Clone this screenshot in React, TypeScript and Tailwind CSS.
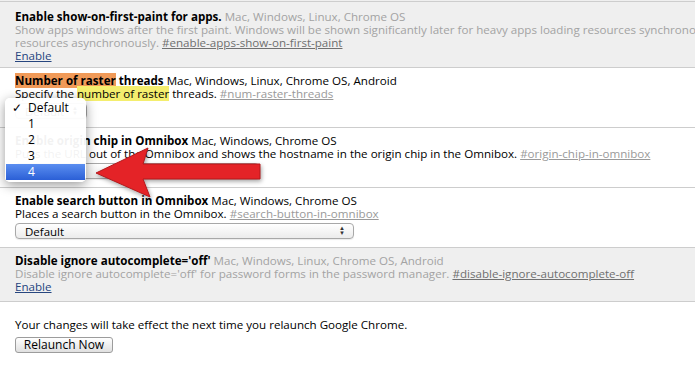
import React from 'react'

const FONT = { fontFamily: '"Open Sans", "Noto Sans", sans-serif' }

function Link({ children, className = '' }: { children: React.ReactNode; className?: string }) {
  return <span className={`underline ${className}`}>{children}</span>
}

function SelectBox({ width, label = 'Default' }: { width: string; label?: string }) {
  return (
    <div
      className={`mt-[3px] ${width} h-[16px] flex items-center justify-between rounded-[4px] border border-[#a8a8a8] bg-gradient-to-b from-white to-[#ececec] pl-[9px] pr-[8px] text-[11.5px] text-black shadow-[0_1px_1px_rgba(0,0,0,0.08)]`}
    >
      <span>{label}</span>
      <span className="flex flex-col items-center text-[6px] leading-[5px] text-[#333]">
        <span>▲</span>
        <span>▼</span>
      </span>
    </div>
  )
}

function Row({ gray, first, children }: { gray?: boolean; first?: boolean; children: React.ReactNode }) {
  return (
    <div
      className={`border-b border-[#cdcdcd] px-[15px] leading-[13px] whitespace-nowrap overflow-hidden ${first ? 'pt-[8px] pb-[5px]' : 'pt-[6px] pb-[8px]'} ${gray ? 'bg-[#efefef]' : 'bg-white'}`}
    >
      {children}
    </div>
  )
}

export default function App() {
  return (
    <div className="relative w-[695px] h-[367px] overflow-hidden bg-white text-[11.6px] text-black" style={FONT}>
      <div className="h-[2px] bg-[#efefef] border-b border-[#cdcdcd]" />

      {/* 1. disabled */}
      <Row gray first>
        <div>
          <b>Enable show-on-first-paint for apps.</b>{' '}
          <span className="text-[#a3a3a3]">Mac, Windows, Linux, Chrome OS</span>
        </div>
        <div className="text-[#a3a3a3]">
          Show apps windows after the first paint. Windows will be shown significantly later for heavy apps loading resources synchronously than for apps loading
        </div>
        <div className="text-[#a3a3a3]">
          resources asynchronously. <Link className="text-[#707070]">#enable-apps-show-on-first-paint</Link>
        </div>
        <div>
          <Link className="text-[#27467f]">Enable</Link>
        </div>
      </Row>

      {/* 2. raster threads */}
      <Row>
        <div>
          <b>
            <span className="bg-[#f09a58]">Number of raster</span> threads
          </b>{' '}
          Mac, Windows, Linux, Chrome OS, Android
        </div>
        <div>
          Specify the <span className="bg-[#f4ee6e]">number of raster</span> threads.{' '}
          <Link className="text-[#9a9a9a]">#num-raster-threads</Link>
        </div>
        <SelectBox width="w-[72px]" />
      </Row>

      {/* 3. origin chip */}
      <Row>
        <div>
          <b>Enable origin chip in Omnibox</b> Mac, Windows, Chrome OS
        </div>
        <div>
          Pulls the URL out of the Omnibox and shows the hostname in the origin chip in the Omnibox.{' '}
          <Link className="text-[#9a9a9a]">#origin-chip-in-omnibox</Link>
        </div>
        <SelectBox width="w-[244px]" />
      </Row>

      {/* 4. search button */}
      <Row>
        <div>
          <b>Enable search button in Omnibox</b> Mac, Windows, Chrome OS
        </div>
        <div>
          Places a search button in the Omnibox.{' '}
          <Link className="text-[#9a9a9a]">#search-button-in-omnibox</Link>
        </div>
        <SelectBox width="w-[339px]" />
      </Row>

      {/* 5. disabled */}
      <Row gray>
        <div>
          <b>Disable ignore autocomplete='off'</b>{' '}
          <span className="text-[#a3a3a3]">Mac, Windows, Linux, Chrome OS, Android</span>
        </div>
        <div className="text-[#a3a3a3]">
          Disable ignore autocomplete='off' for password forms in the password manager.{' '}
          <Link className="text-[#707070]">#disable-ignore-autocomplete-off</Link>
        </div>
        <div>
          <Link className="text-[#27467f]">Enable</Link>
        </div>
      </Row>

      {/* footer */}
      <div className="px-[15px] pt-[16px] leading-[14px] text-[11.6px]">
        <div>Your changes will take effect the next time you relaunch Google Chrome.</div>
        <button className="mt-[5px] h-[16px] w-[98px] rounded-[3px] border border-[#9c9c9c] bg-gradient-to-b from-white to-[#e0e0e0] text-[12px] leading-[14px] text-black">
          Relaunch Now
        </button>
      </div>

      {/* open dropdown menu */}
      <div className="absolute left-[5px] top-[98px] w-[81px] rounded-[5px] bg-white/[0.95] py-[2px] shadow-[0_3px_12px_rgba(0,0,0,0.4)] text-[12px]">
        {['Default', '1', '2', '3', '4'].map((o, i) => (
          <div
            key={o}
            className={`flex h-[16px] items-center ${i === 4 ? 'mx-[1px] bg-gradient-to-b from-[#5b8ef0] to-[#2b5fd6] text-white' : ''}`}
          >
            <span className={`inline-block text-right pr-[6px] ${i === 4 ? 'w-[22px]' : 'w-[23px]'}`}>{i === 0 ? '✓' : ''}</span>
            <span>{o}</span>
          </div>
        ))}
      </div>

      {/* red arrow */}
      <svg
        className="absolute left-[90px] top-[144px]"
        width="180"
        height="58"
        viewBox="0 0 180 58"
        style={{ filter: 'drop-shadow(1px 2px 2px rgba(0,0,0,0.35))' }}
      >
        <path d="M6 29 L58 4 L53 20 L170 20 L170 35 L53 35 L60 53 Z" fill="#e42327" stroke="#b5181b" strokeWidth="1" strokeLinejoin="round" />
      </svg>
    </div>
  )
}
